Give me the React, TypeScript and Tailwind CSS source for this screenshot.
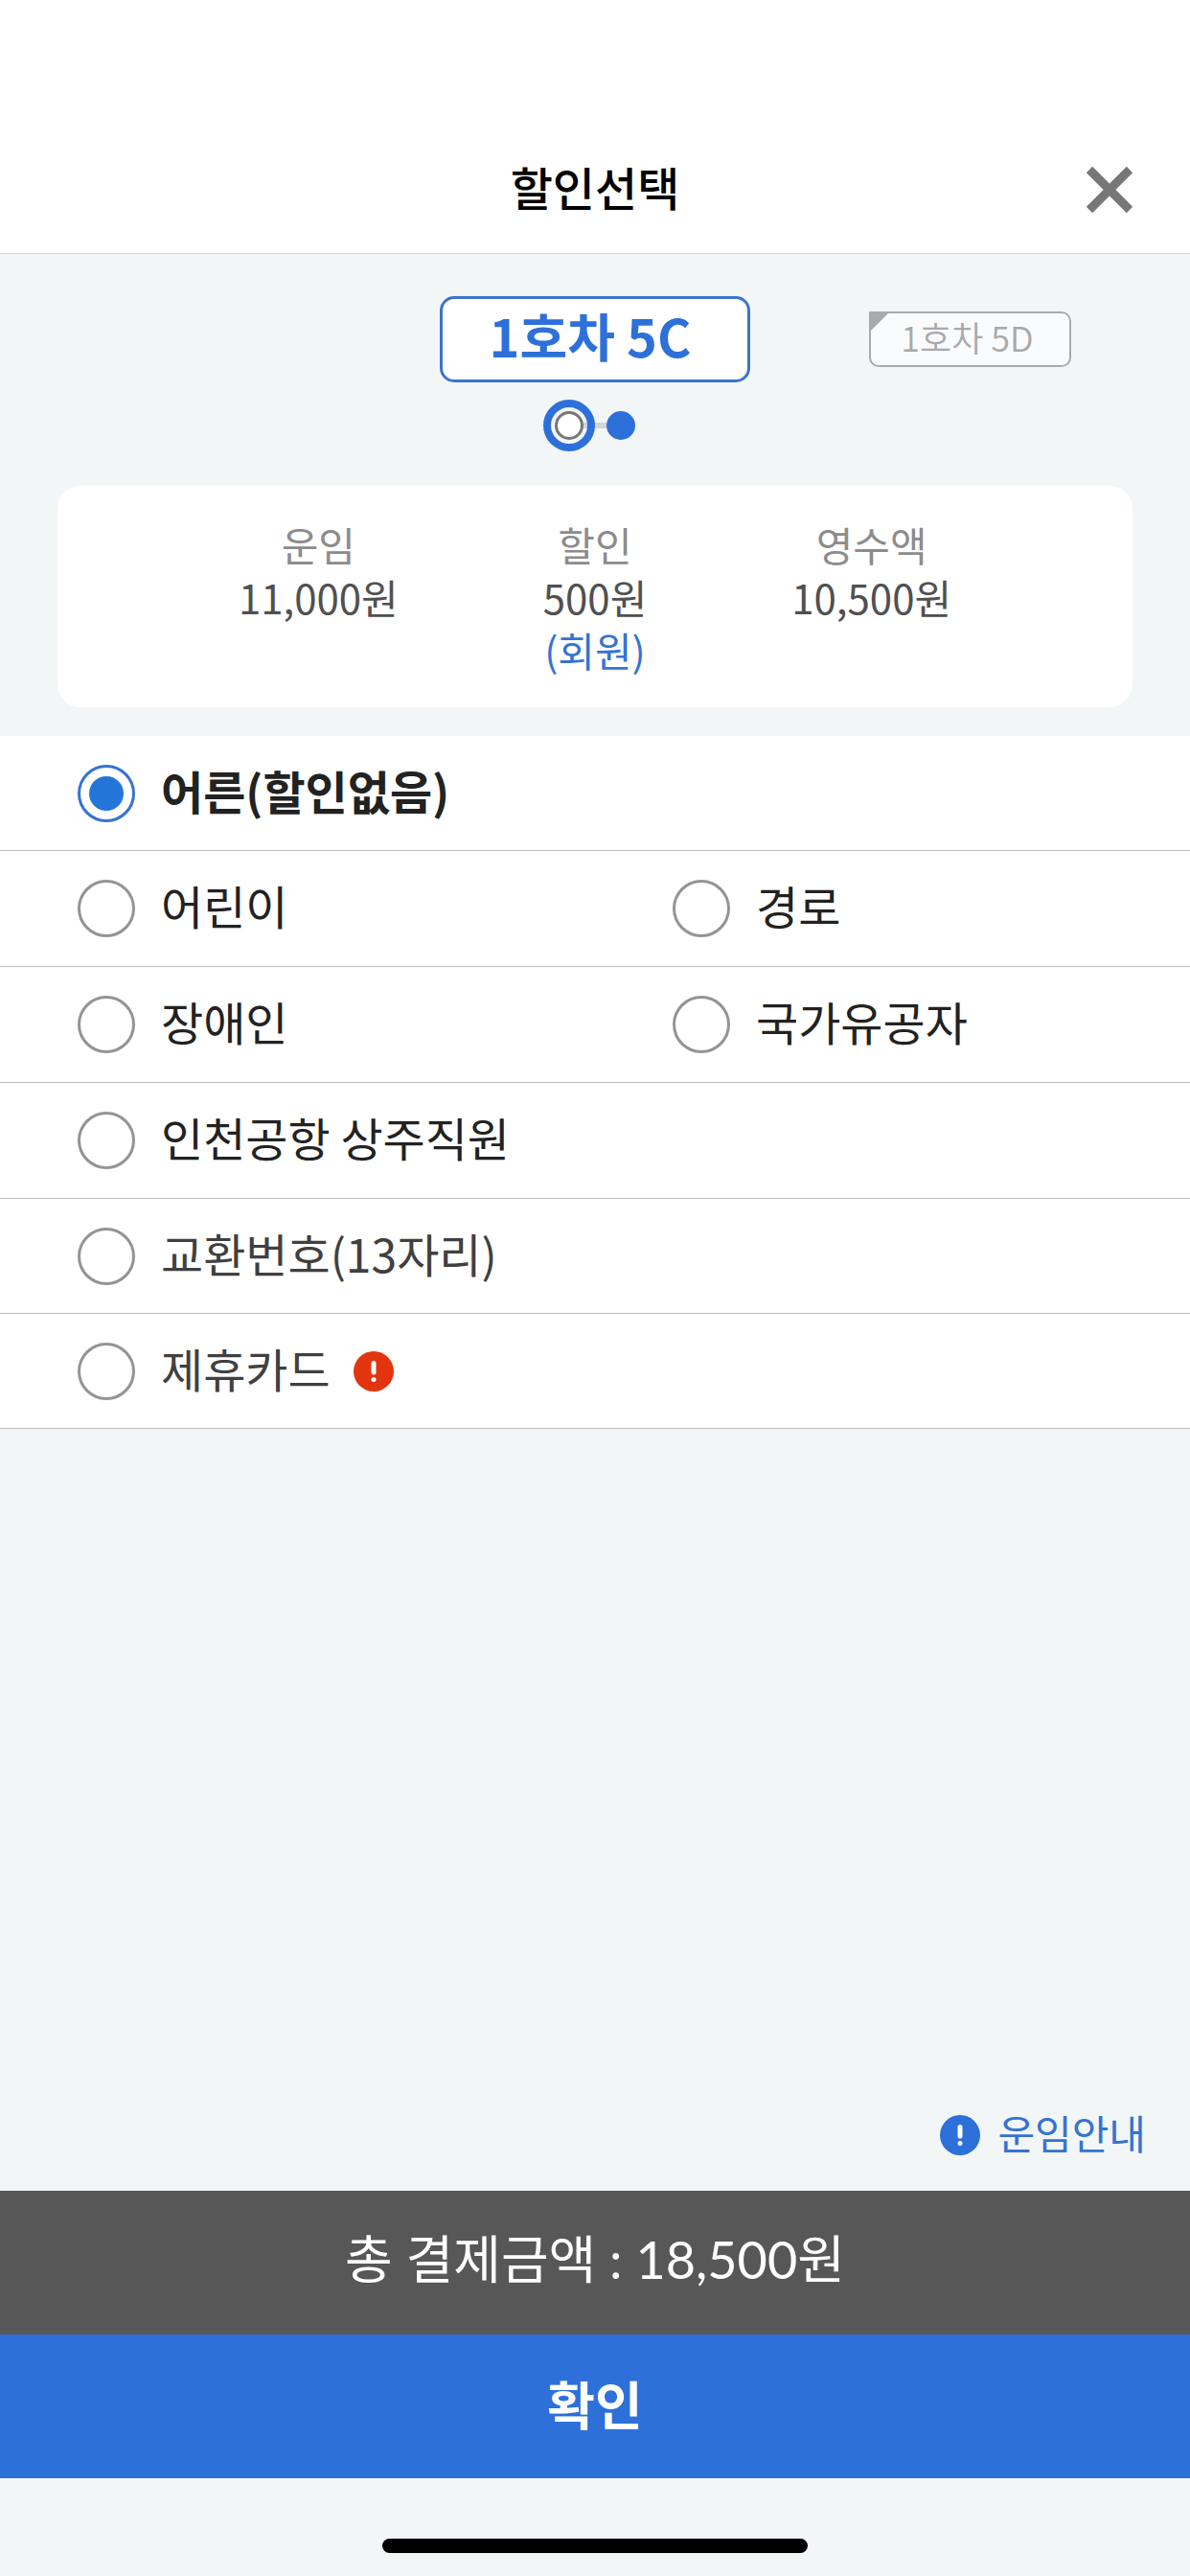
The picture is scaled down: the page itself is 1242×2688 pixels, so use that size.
import React, { useState } from 'react';
import clsx from 'clsx';

interface Option {
    value: string;
    label: string;
    notice?: boolean;
}

interface OptionRow {
    options: Option[];
    className: string;
}

const fares = [
    { label: '운임', amount: '11,000원' },
    { label: '할인', amount: '500원', note: '(회원)' },
    { label: '영수액', amount: '10,500원' },
];

const optionRows: OptionRow[] = [
    { options: [{ value: 'adult', label: '어른(할인없음)' }], className: 'h-[120px] text-[#222222]' },
    {
        options: [
            { value: 'child', label: '어린이' },
            { value: 'senior', label: '경로' },
        ],
        className: 'h-[121px] text-[#222222]',
    },
    {
        options: [
            { value: 'disabled', label: '장애인' },
            { value: 'veteran', label: '국가유공자' },
        ],
        className: 'h-[121px] text-[#222222]',
    },
    { options: [{ value: 'airport', label: '인천공항 상주직원' }], className: 'h-[121px] text-[#222222]' },
    { options: [{ value: 'voucher', label: '교환번호(13자리)' }], className: 'h-[120px] text-[#404040]' },
    { options: [{ value: 'card', label: '제휴카드', notice: true }], className: 'h-[120px] text-[#404040]' },
];

const NoticeIcon: React.FC<{ className?: string }> = ({ className }) => (
    <svg viewBox="0 0 42 42" className={clsx('size-[42px] shrink-0', className)} aria-hidden="true">
        <circle cx="21" cy="21" r="21" fill="currentColor" />
        <rect x="18.5" y="10" width="5" height="14.5" rx="2.5" fill="white" />
        <circle cx="21" cy="29.5" r="2.5" fill="white" />
    </svg>
);

const CloseIcon: React.FC = () => (
    <svg viewBox="0 0 50 50" className="size-[50px]" aria-hidden="true">
        <path d="M4 4 L46 46 M46 4 L4 46" stroke="#777777" strokeWidth="9" fill="none" />
    </svg>
);

const Header: React.FC = () => (
    <header className="grid h-[265px] grid-cols-[1fr_auto_1fr] items-center border-b border-[#d3d6d8] bg-white px-[59px] pt-[132px]">
        <h1 className="col-start-2 pb-2 text-[48px] leading-[72px] font-medium text-black">할인선택</h1>
        <button type="button" aria-label="닫기" className="justify-self-end">
            <CloseIcon />
        </button>
    </header>
);

const SeatPicker: React.FC = () => (
    <section className="flex flex-col items-center pt-11">
        <div className="grid w-full grid-cols-[1fr_324px_1fr] items-center">
            <button
                type="button"
                className="col-start-2 h-[90px] rounded-[15px] border-3 border-[#3a74cc] bg-white pr-2.5 pb-2 text-[54px] leading-[76px] font-bold text-[#2d70da]"
            >
                1호차 5C
            </button>
            <button
                type="button"
                className="relative ml-[124px] flex h-[58px] w-[211px] items-center justify-center rounded-[10px] border-2 border-[#a9abab] bg-[#fafbfd] pr-1.5 pb-1.5 text-[36px] leading-[48px] font-[350] text-[#a9a9a9]"
            >
                <svg viewBox="0 0 22 22" className="absolute -top-[2px] -left-[2px] size-[22px]" aria-hidden="true">
                    <path d="M0 0 H22 L0 22 Z" fill="#a9abab" />
                </svg>
                1호차 5D
            </button>
        </div>
        <div className="mt-[30px] flex items-center">
            <span className="relative size-[30px] rounded-full border-3 border-[#777777] bg-white">
                <span className="absolute -inset-[15px] rounded-full border-8 border-[#2d70da]" />
            </span>
            <span className="h-[6px] w-6 bg-[#d3d5d7]" />
            <span className="size-[30px] rounded-full bg-[#2d70da]" />
        </div>
    </section>
);

const FareCard: React.FC = () => (
    <section className="mx-[60px] mt-12 mb-[30px] grid grid-cols-3 rounded-[24px] bg-white px-[128px] py-[33px] text-center text-[42px] leading-[55px]">
        {fares.map(fare => (
            <div key={fare.label}>
                <p className="text-[#8c8c8c]">{fare.label}</p>
                <p className="text-[#505050]">{fare.amount}</p>
                {fare.note && <p className="text-[#3573d2]">{fare.note}</p>}
            </div>
        ))}
    </section>
);

const DiscountOptions: React.FC = () => {
    const [selected, setSelected] = useState('adult');

    return (
        <fieldset className="bg-white">
            {optionRows.map(row => (
                <div key={row.options[0].value} className={clsx('grid grid-cols-2 items-center border-b border-[#bbbbbb]', row.className)}>
                    {row.options.map(option => (
                        <div key={option.value} className="flex items-center pl-[81px]">
                            <label className="flex items-center gap-[27px] text-[48px] leading-[72px] whitespace-nowrap has-checked:font-bold">
                                <input
                                    type="radio"
                                    name="discount"
                                    value={option.value}
                                    checked={selected === option.value}
                                    onChange={() => setSelected(option.value)}
                                    className="grid size-[60px] shrink-0 appearance-none place-items-center rounded-full border-3 border-[#949494] bg-white checked:border-[#3573d2] checked:before:size-9 checked:before:rounded-full checked:before:bg-[#2376d8] checked:before:content-['']"
                                />
                                <span className="pb-2">{option.label}</span>
                            </label>
                            {option.notice && (
                                <button type="button" aria-label="제휴카드 안내" className="ml-6">
                                    <NoticeIcon className="text-[#e33410]" />
                                </button>
                            )}
                        </div>
                    ))}
                </div>
            ))}
        </fieldset>
    );
};

export default function App() {
    return (
        <div className="flex min-h-screen flex-col bg-[#f2f6f7] font-['Noto_Sans_CJK_KR',sans-serif]">
            <Header />
            <main className="flex grow flex-col">
                <SeatPicker />
                <FareCard />
                <DiscountOptions />
                <a href="#fare-info" className="mt-auto mb-6 flex items-center gap-[18px] self-end pr-[46px] text-[42px] leading-[62px] text-[#3573d2]">
                    <NoticeIcon className="text-[#2d70da]" />
                    <span className="pb-1.5">운임안내</span>
                </a>
            </main>
            <footer className="text-center text-[54px] leading-[144px] text-white">
                <p className="bg-[#575757] pb-1.5 font-[Lato,'Noto_Sans_CJK_KR',sans-serif]">총 결제금액 : 18,500원</p>
                <button type="button" className="block w-full bg-[#2d70da] pb-1.5 font-bold">
                    확인
                </button>
                <div className="mx-auto mt-[63px] mb-6 h-[15px] w-[444px] rounded-full bg-black" />
            </footer>
        </div>
    );
}
